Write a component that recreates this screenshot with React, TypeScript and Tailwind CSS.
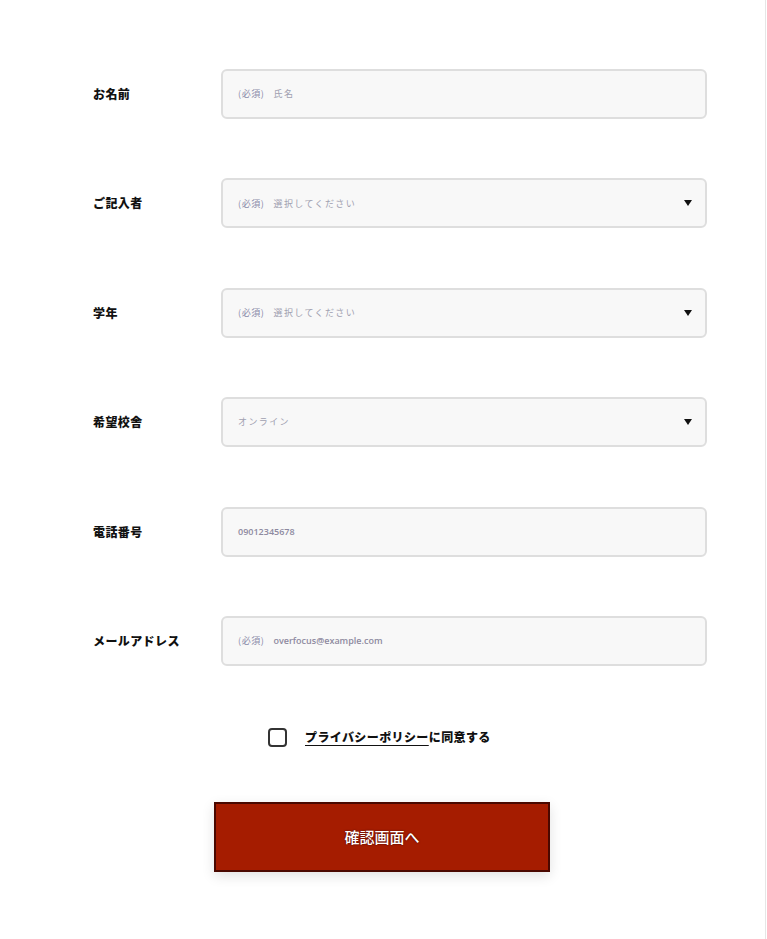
const jp = { fontFamily: '"Noto Sans CJK JP", "Noto Sans", sans-serif' };

type Field = {
  label: string;
  required?: boolean;
  placeholder: string;
  select?: boolean;
  latin?: boolean;
};

const fields: Field[] = [
  { label: 'お名前', required: true, placeholder: '氏名' },
  { label: 'ご記入者', required: true, placeholder: '選択してください', select: true },
  { label: '学年', required: true, placeholder: '選択してください', select: true },
  { label: '希望校舎', placeholder: 'オンライン', select: true },
  { label: '電話番号', placeholder: '09012345678', latin: true },
  { label: 'メールアドレス', required: true, placeholder: 'overfocus@example.com', latin: true },
];

function Arrow() {
  return (
    <svg width="8" height="6" viewBox="0 0 8 6" className="shrink-0">
      <path d="M0 0h8L4 6z" fill="#111" />
    </svg>
  );
}

function FormRow({ field }: { field: Field }) {
  return (
    <div className="flex items-center">
      <div className="w-[128px] shrink-0 text-[12px] font-black tracking-[0.4px] text-[#111]" style={jp}>
        {field.label}
      </div>
      <div className="flex h-[50px] w-[486px] items-center rounded-[6px] border-2 border-[#dedede] bg-[#f8f8f8] pl-[15px] pr-[13px]">
        <div className="flex flex-1 items-center gap-[9px] text-[9px]" style={jp}>
          {field.required && <span className="tracking-[0.6px] text-[#8a8aa8]">(必須)</span>}
          <span
            className={
              field.latin
                ? 'font-semibold text-[#8e8aa0]'
                : 'tracking-[1.4px] text-[#a0a0b0]'
            }
            style={field.latin ? { fontFamily: '"Open Sans", "Liberation Sans", sans-serif' } : jp}
          >
            {field.placeholder}
          </span>
        </div>
        {field.select && <Arrow />}
      </div>
    </div>
  );
}

export default function App() {
  return (
    <div className="min-h-[939px] w-[766px] border-r border-[#e6e6e6] bg-white">
      <form className="flex flex-col pl-[93px] pt-[69px]">
        <div className="flex flex-col gap-[59.4px]">
          {fields.map((f) => (
            <FormRow key={f.label} field={f} />
          ))}
        </div>

        <div className="mt-[62px] flex items-center pl-[175px]">
          <span className="h-[19px] w-[19px] rounded-[4px] border-2 border-[#333] bg-white" />
          <span className="ml-[18px] text-[12px] font-black tracking-[0.4px] text-[#111]" style={jp}>
            <span className="underline underline-offset-[3px]">プライバシーポリシー</span>に同意する
          </span>
        </div>

        <div className="mt-[55px] pl-[121px]">
          <button
            type="button"
            className="h-[70px] w-[336px] border-2 border-[#4a0800] bg-[#a51c00] text-[15px] font-medium text-white shadow-[0_4px_12px_rgba(0,0,0,0.12)] [text-shadow:0_0_2px_#3a0000]"
            style={jp}
          >
            確認画面へ
          </button>
        </div>
      </form>
    </div>
  );
}
